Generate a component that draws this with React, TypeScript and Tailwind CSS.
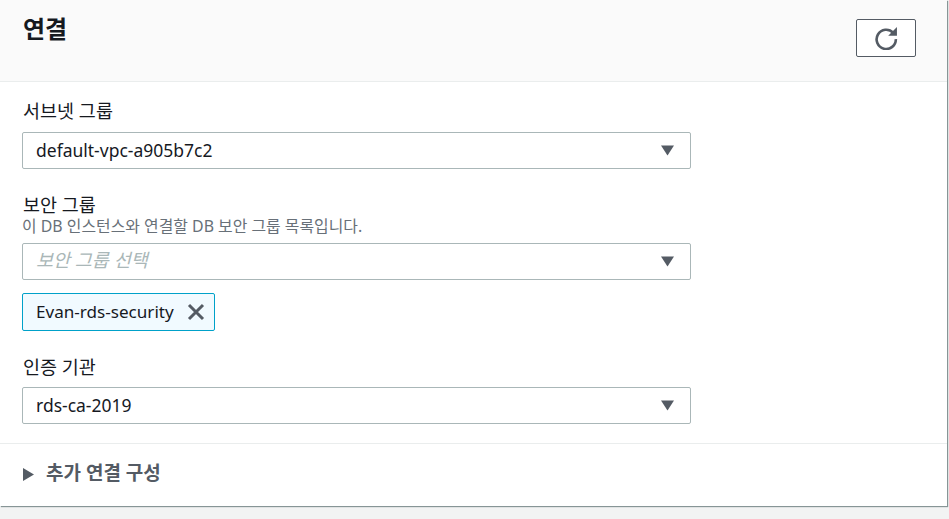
const font = "font-['Noto_Sans','Noto_Sans_CJK_KR',sans-serif]";

function Caret() {
    return (
        <svg width="13" height="11" viewBox="0 0 13 11" className="fill-[#545b64]">
            <path d="M0 0.5h13L6.5 10.5z" />
        </svg>
    );
}

function RefreshIcon() {
    return (
        <svg width="24" height="24" viewBox="0 0 22 22" fill="none">
            <path d="M17.6 6.2A8.8 8.8 0 1 0 20 12" stroke="#545b64" strokeWidth="2.4" />
            <path d="M21 1V9H13z" fill="#545b64" />
        </svg>
    );
}

function CloseIcon() {
    return (
        <svg width="18" height="18" viewBox="0 0 18 18" fill="none" stroke="#545b64" strokeWidth="3">
            <path d="M2 2l14 14M16 2L2 16" />
        </svg>
    );
}

function SelectBox({ value, placeholder }: { value?: string; placeholder?: string }) {
    return (
        <div className="flex h-[37px] w-[669px] items-center justify-between rounded-[2px] border border-[#aab7b8] bg-white pl-[13px] pr-[16px]">
            {value ? (
                <span className="pb-[2px] text-[17.5px] leading-[22px] text-[#16191f]">{value}</span>
            ) : (
                <span className="pb-[4px] text-[18.5px] italic leading-[22px] text-[#aab7b8]">{placeholder}</span>
            )}
            <Caret />
        </div>
    );
}

export default function App() {
    return (
        <div className={`h-[519px] w-[949px] overflow-hidden bg-[#f2f3f3] ${font}`}>
            <div className="h-[506px] w-[947px] bg-white shadow-[1px_1px_1px_0_#879596]">
                <div className="flex h-[82px] justify-between border-b border-[#eaeded] bg-[#fafafa] pl-[23px] pr-[31px]">
                    <h2 className="pt-[13px] text-[24px] font-bold leading-[32px] text-[#16191f]">연결</h2>
                    <button className="mt-[19px] flex h-[38px] w-[60px] items-center justify-center rounded-[2px] border border-[#545b64] bg-white">
                        <RefreshIcon />
                    </button>
                </div>

                <div className="flex flex-col px-[22px] pt-[17px]">
                    <label className="pl-[1px] text-[18.5px] leading-[24px] text-[#16191f]">서브넷 그룹</label>
                    <div className="mt-[9px]">
                        <SelectBox value="default-vpc-a905b7c2" />
                    </div>

                    <label className="mt-[24px] pl-[1px] text-[18.5px] leading-[24px] text-[#16191f]">보안 그룹</label>
                    <p className="mt-[1px] text-[15.9px] leading-[17px] text-[#687078]">이 DB 인스턴스와 연결할 DB 보안 그룹 목록입니다.</p>
                    <div className="mt-[8px]">
                        <SelectBox placeholder="보안 그룹 선택" />
                    </div>
                    <div className="mt-[13px] flex h-[38px] w-[193px] items-center justify-between rounded-[2px] border border-[#00a1c9] bg-[#f1faff] pl-[13px] pr-[9px]">
                        <span className="text-[17.1px] leading-[22px] text-[#16191f]">Evan-rds-security</span>
                        <CloseIcon />
                    </div>

                    <label className="mt-[24px] pl-[1px] text-[18.5px] leading-[24px] text-[#16191f]">인증 기관</label>
                    <div className="mt-[8px]">
                        <SelectBox value="rds-ca-2019" />
                    </div>
                </div>

                <div className="mt-[19px] flex items-center gap-[12px] border-t border-[#eaeded] pl-[23px] pt-[17px]">
                    <svg width="11" height="13" viewBox="0 0 11 13" className="mt-[3px] fill-[#545b64]">
                        <path d="M0 0L11 6.5L0 13z" />
                    </svg>
                    <span className="text-[19px] font-bold leading-[24px] text-[#545b64]">추가 연결 구성</span>
                </div>
            </div>
        </div>
    );
}
